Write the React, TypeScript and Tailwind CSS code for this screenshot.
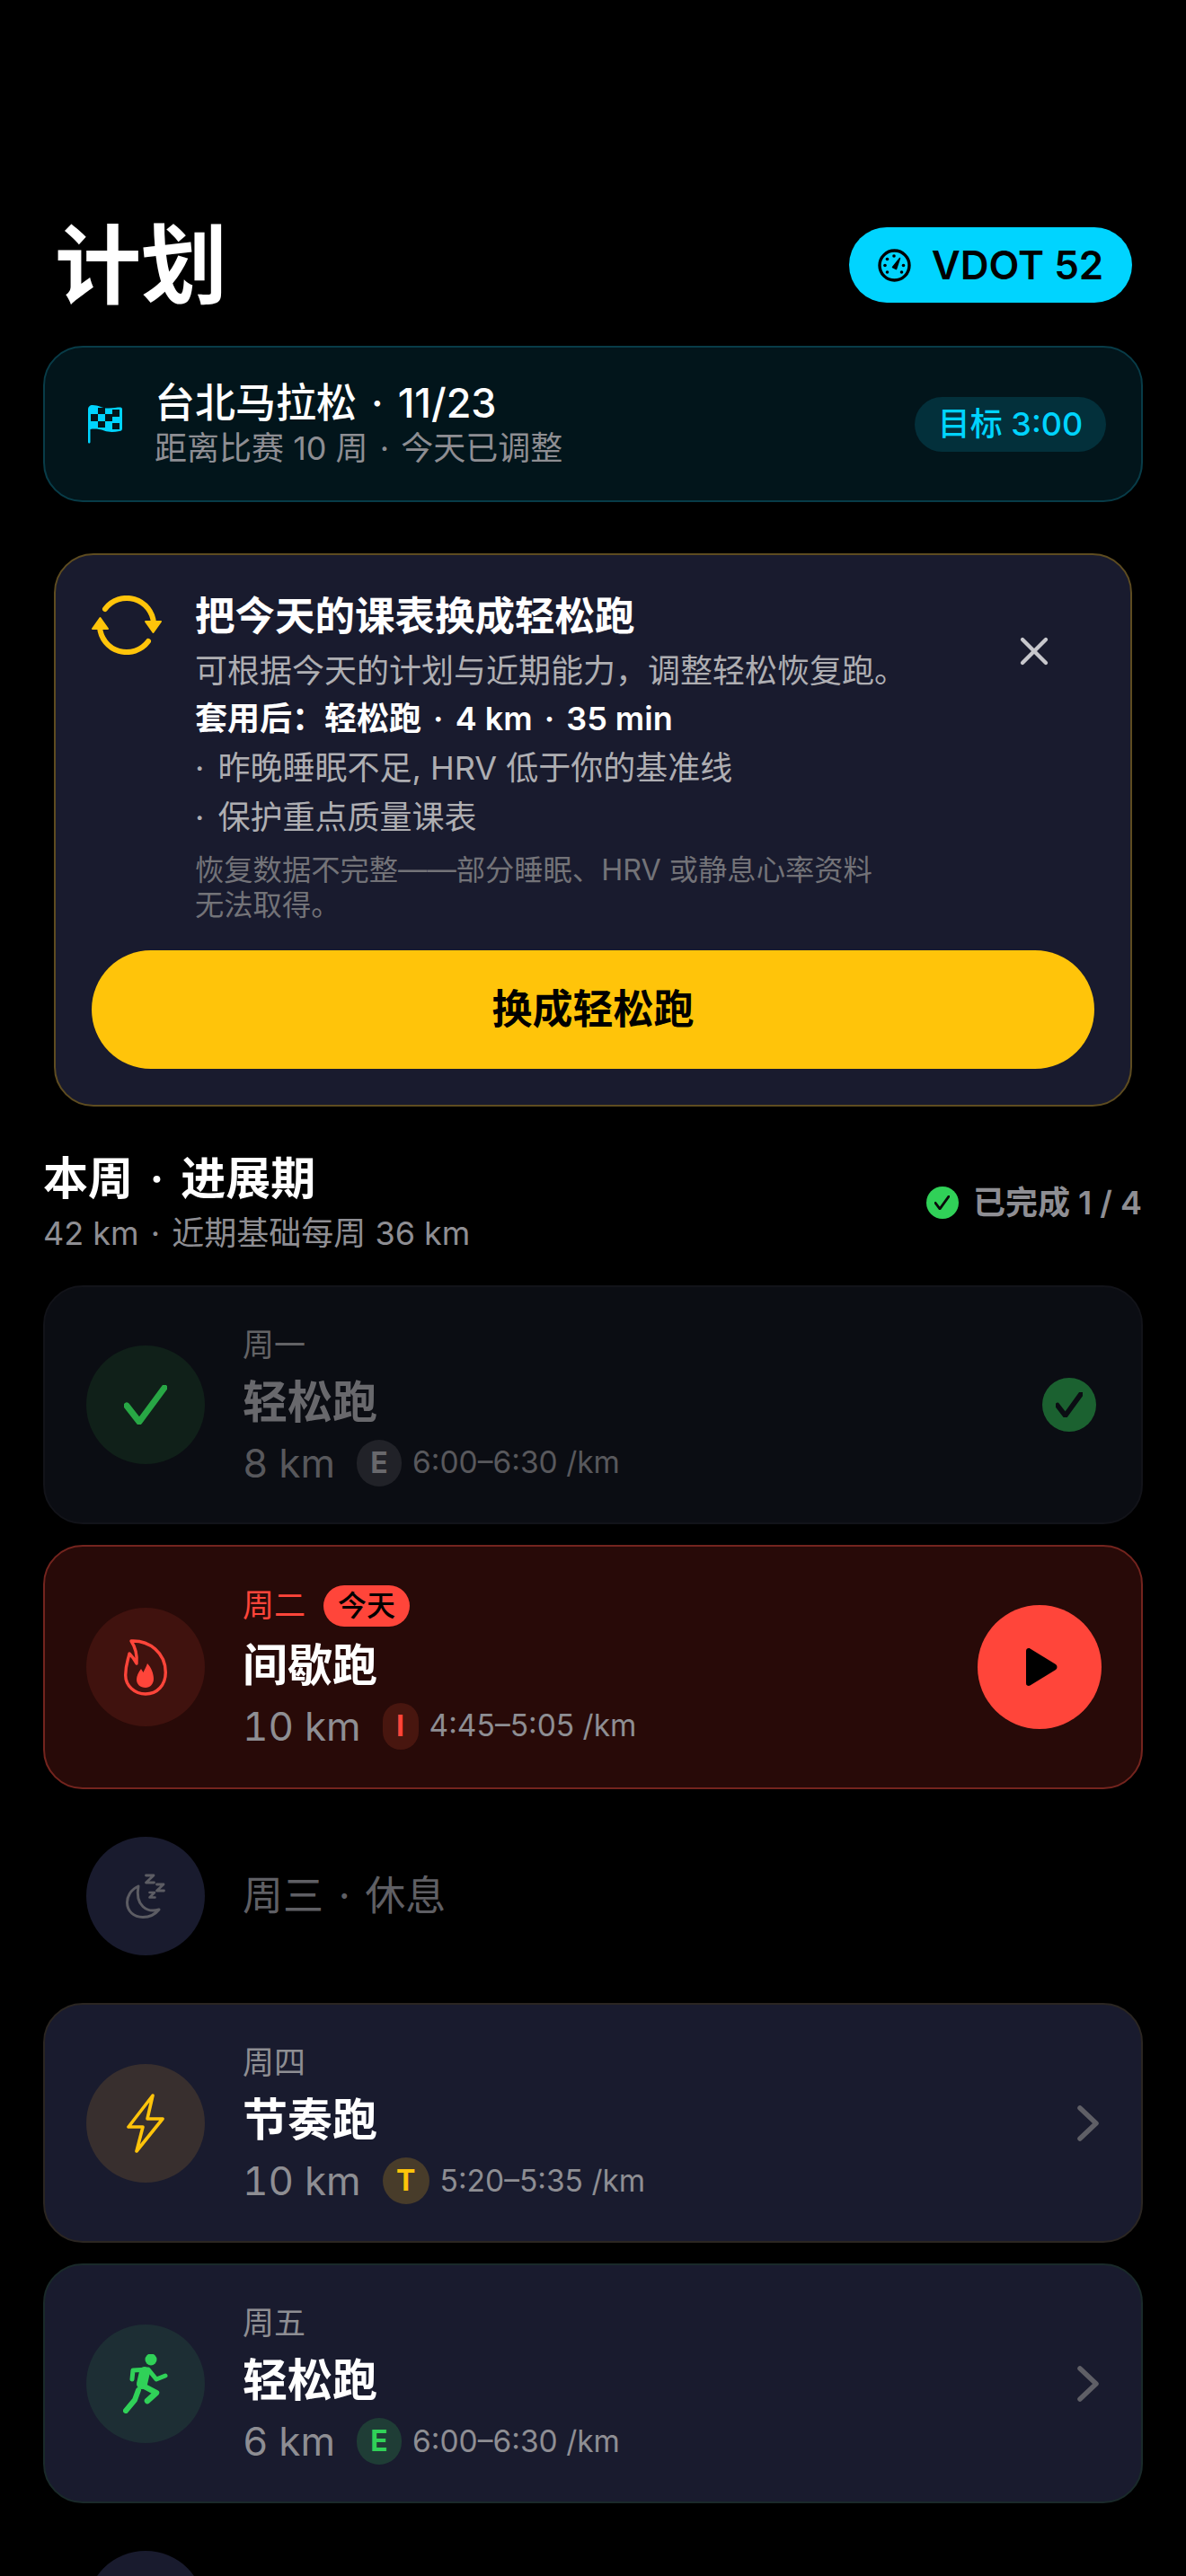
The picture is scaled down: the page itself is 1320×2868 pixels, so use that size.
import type { ReactNode } from "react";
import { X } from "lucide-react";

function GaugeIcon() {
  return (
    <svg width="37" height="37" viewBox="0 0 37 37" fill="none">
      <circle cx="18.5" cy="18.5" r="16.5" stroke="#000" strokeWidth="3.4" />
      <path d="M16.5 20.5 L24.5 10.5 L20.5 22.5 Z" fill="#000" stroke="#000" strokeWidth="1.5" strokeLinejoin="round" />
      <g fill="#000">
        <circle cx="18" cy="8" r="1.8" />
        <circle cx="10.5" cy="11.5" r="1.8" />
        <circle cx="8" cy="18.5" r="1.8" />
        <circle cx="10.5" cy="26" r="1.8" />
        <circle cx="28.5" cy="18.5" r="1.8" />
        <circle cx="26.5" cy="26" r="1.8" />
      </g>
    </svg>
  );
}

function FlagIcon() {
  return (
    <svg width="40" height="44" viewBox="0 0 40 44" fill="none">
      <path
        d="M1 42 V6 C1 3 3 1 6 1 C13 1 17 5 24 4.5 C29 4.2 33 3.5 37 3.5 C38.5 3.5 39 4.5 39 6 V27 C39 29 38 30 36 30 C30 31 25 31.5 19 29.5 C13 27.5 8 27 3.5 28 V42 C3.5 44 1 44 1 42 Z"
        fill="#00d4ff"
      />
      <g fill="#02151b">
        <rect x="4" y="11" width="8" height="8" />
        <rect x="12" y="4" width="8" height="7" />
        <rect x="20" y="11" width="8" height="8" />
        <rect x="28" y="6" width="8" height="8" />
        <rect x="12" y="19" width="8" height="7" />
        <rect x="28" y="21" width="8" height="7" />
      </g>
    </svg>
  );
}

function SwapIcon() {
  return (
    <svg width="78" height="66" viewBox="0 0 78 66" fill="none">
      <path d="M15 15 A30 30 0 0 1 69 31" stroke="#ffc40a" strokeWidth="6" strokeLinecap="round" />
      <path d="M63 51 A30 30 0 0 1 9 35" stroke="#ffc40a" strokeWidth="6" strokeLinecap="round" />
      <path d="M60 29 H77 L68.5 41 Z" fill="#ffc40a" stroke="#ffc40a" strokeWidth="2" strokeLinejoin="round" />
      <path d="M1 37 H18 L9.5 25 Z" fill="#ffc40a" stroke="#ffc40a" strokeWidth="2" strokeLinejoin="round" />
    </svg>
  );
}

function FlameIcon() {
  return (
    <svg width="48" height="64" viewBox="0 0 48 64" fill="none">
      <path
        d="M8 3 C12 9 15 16 14 28 C12 24 10 21 6 17 C4 26 1.7 30 1.7 41 C1.7 53 12 62 24 62 C37 62 46.3 52 46.3 38 C46.3 16 28 2 8 3 Z"
        stroke="#ff453a"
        strokeWidth="3.4"
        strokeLinejoin="round"
      />
      <path
        d="M14 46 C14 42 16 38 19 34 L21.5 38 C23 35 25 31 26 28 C30 32 33 39 33 45 C33 51 29 55 24 55 C18 55 14 51 14 46 Z"
        fill="#ff453a"
      />
    </svg>
  );
}

function MoonIcon({ color }: { color: string }) {
  return (
    <svg width="44" height="50" viewBox="0 0 44 50" fill="none" stroke={color} strokeLinecap="round" strokeLinejoin="round">
      <path d="M14 14 C5 18 1.5 26 1.5 32 C1.5 42 9 48.5 19 48.5 C27 48.5 33 45 37 40 C24 44 10 36 14 14 Z" strokeWidth="3" />
      <path d="M22.5 2 H31 L22.5 10 H31.5" strokeWidth="2.8" />
      <path d="M34.5 12 H42 L34.5 19 H42.5" strokeWidth="2.8" />
      <path d="M26.5 21 H32 L26.5 26.5 H32.5" strokeWidth="2.6" />
    </svg>
  );
}

function BoltIcon() {
  return (
    <svg width="42" height="66" viewBox="0 0 42 66" fill="none">
      <path d="M29 2 L2 37 H18 L11 64 L40 28 H23 Z" stroke="#ffc40a" strokeWidth="3.6" strokeLinejoin="round" />
    </svg>
  );
}

function RunnerIcon() {
  return (
    <svg width="50" height="66" viewBox="0 0 50 66" fill="none" stroke="#30d158" strokeLinecap="round" strokeLinejoin="round">
      <circle cx="31" cy="6" r="6.5" fill="#30d158" stroke="none" />
      <path d="M10 28 L11 18 L28 17 L37 28 L47 24" strokeWidth="5" />
      <path d="M24 20 L21 33" strokeWidth="12" />
      <path d="M20 34 L37 43 L27 52" strokeWidth="6.5" />
      <path d="M17 40 L13 51 L3 63" strokeWidth="6" />
    </svg>
  );
}

function CheckMark({ w, h, sw, color }: { w: number; h: number; sw: number; color: string }) {
  return (
    <svg width={w} height={h} viewBox="0 0 48 44" fill="none" preserveAspectRatio="none">
      <path d="M3 23 L17 41 L45 3" stroke={color} strokeWidth={sw} strokeLinecap="round" strokeLinejoin="round" />
    </svg>
  );
}

function Chevron() {
  return (
    <svg width="24" height="40" viewBox="0 0 24 40" fill="none">
      <path d="M3 3 L21 20 L3 37" stroke="#5f5f66" strokeWidth="5.5" strokeLinecap="round" strokeLinejoin="round" />
    </svg>
  );
}

function Dot({ gap }: { gap: string }) {
  return <span className={gap}>·</span>;
}

type Workout = {
  day: string;
  title: string;
  km: string;
  zone: string;
  pace: string;
  icon: ReactNode;
  iconBg: string;
  zoneClass: string;
  borderClass: string;
};

const THURSDAY: Workout = {
  day: "周四",
  title: "节奏跑",
  km: "10 km",
  zone: "T",
  pace: "5:20–5:35 /km",
  icon: <BoltIcon />,
  iconBg: "bg-[#382f2e]",
  zoneClass: "w-[52px] bg-[#483c2a] text-[#ffc40a]",
  borderClass: "border-[#2b2622]",
};

const FRIDAY: Workout = {
  day: "周五",
  title: "轻松跑",
  km: "6 km",
  zone: "E",
  pace: "6:00–6:30 /km",
  icon: <RunnerIcon />,
  iconBg: "bg-[#1d2e34]",
  zoneClass: "w-[50px] bg-[#1f3d36] text-[#30d158]",
  borderClass: "border-[#1a2a2a]",
};

function WorkoutCard({ w }: { w: Workout }) {
  return (
    <div className={`flex h-[267px] items-center rounded-[44px] border-2 bg-[#191b2e] pl-[46px] pr-[47px] ${w.borderClass}`}>
      <div className={`flex h-[132px] w-[132px] shrink-0 items-center justify-center rounded-full ${w.iconBg}`}>{w.icon}</div>
      <div className="ml-[42px] flex-1">
        <p className="text-[35px] leading-[46px] text-[#8e8e93]">{w.day}</p>
        <p className="mt-[9px] text-[50px] font-semibold leading-[64px] text-white">{w.title}</p>
        <div className="mt-[10px] flex h-[52px] items-center">
          <span className="text-[44px] tabular-nums text-[#8e8e93]">{w.km}</span>
          <span className={`ml-[24px] flex h-[52px] items-center justify-center rounded-full text-[32px] font-bold ${w.zoneClass}`}>{w.zone}</span>
          <span className="ml-[12px] text-[33.5px] text-[#8e8e93]">{w.pace}</span>
        </div>
      </div>
      <Chevron />
    </div>
  );
}

function RestCircle() {
  return (
    <div className="flex h-[132px] w-[132px] items-center justify-center rounded-full bg-[#191b2e]">
      <MoonIcon color="#5c5c63" />
    </div>
  );
}

export default function App() {
  return (
    <div className="h-[2868px] w-full overflow-hidden bg-black pt-[253px] font-['Inter','Noto_Sans_CJK_SC',sans-serif]">
      <header className="flex h-[84px] items-center justify-between pl-[61px] pr-[60px]">
        <h1 className="text-[96px] font-bold leading-[84px] text-white">计划</h1>
        <div className="flex h-[84px] w-[315px] items-center justify-center gap-[23px] rounded-full bg-[#00d4ff]">
          <GaugeIcon />
          <span className="text-[44px] font-semibold text-black">VDOT 52</span>
        </div>
      </header>

      <section className="mx-[48px] mt-[48px] flex h-[174px] items-center rounded-[44px] border-2 border-[#083c48] bg-[#02151b] pl-[47px] pr-[39px]">
        <FlagIcon />
        <div className="ml-[35px] flex-1">
          <p className="text-[45px] font-medium leading-[54px] text-white">
            台北马拉松 <Dot gap="mx-[4px]" /> 11/23
          </p>
          <p className="text-[36px] leading-[46px] text-[#8e8e93]">
            距离比赛 10 周 <Dot gap="mx-[3px]" /> 今天已调整
          </p>
        </div>
        <div className="flex h-[61px] w-[213px] items-center justify-center rounded-full bg-[#03303b] text-[36px] font-medium text-[#00d4ff]">目标 3:00</div>
      </section>

      <section className="mx-[60px] mt-[57px] rounded-[44px] border-2 border-[#5e4c20] bg-[#191b2e] px-[40px] pb-[40px] pt-[40px]">
        <div className="flex">
          <div className="mt-[5px] w-[115px] shrink-0">
            <SwapIcon />
          </div>
          <div className="w-[800px]">
            <p className="text-[44.5px] font-semibold leading-[56px] text-white">把今天的课表换成轻松跑</p>
            <p className="mt-[7px] text-[36px] leading-[52px] text-[#aeaeb2]">可根据今天的计划与近期能力，调整轻松恢复跑。</p>
            <p className="text-[36px] font-semibold leading-[55px] text-white">
              套用后：轻松跑 <Dot gap="mx-[4px]" /> 4 km <Dot gap="mx-[4px]" /> 35 min
            </p>
            <p className="text-[36px] leading-[55px] text-[#aeaeb2]">
              <Dot gap="mr-[5px]" /> 昨晚睡眠不足, HRV 低于你的基准线
            </p>
            <p className="text-[36px] leading-[55px] text-[#aeaeb2]">
              <Dot gap="mr-[5px]" /> 保护重点质量课表
            </p>
            <p className="mt-[11px] text-[32.3px] leading-[39px] text-[#737378]">
              恢复数据不完整——部分睡眠、HRV 或静息心率资料
              <br />
              无法取得。
            </p>
          </div>
          <X className="ml-[108px] mt-[41px] h-[52px] w-[52px] shrink-0 text-[#c7c7cc]" strokeWidth={2} />
        </div>
        <button className="mt-[31px] flex h-[132px] w-full items-center justify-center rounded-full bg-[#ffc40a] text-[45px] font-semibold text-black">换成轻松跑</button>
      </section>

      <div className="mt-[50px] flex items-center justify-between pl-[48px] pr-[49px]">
        <div>
          <p className="text-[50px] font-semibold leading-[60px] text-white">
            本周 <Dot gap="mx-[6px]" /> 进展期
          </p>
          <p className="mt-[6px] text-[36px] leading-[50px] text-[#8e8e93]">
            42 km <Dot gap="mx-[3px]" /> 近期基础每周 36 km
          </p>
        </div>
        <div className="mb-[2px] flex items-center gap-[16px]">
          <span className="flex h-[36px] w-[36px] items-center justify-center rounded-full bg-[#30d158]">
            <CheckMark w={17} h={16} sw={8} color="#0a0a0a" />
          </span>
          <span className="text-[36px] font-semibold text-[#8e8e93]">已完成 1 / 4</span>
        </div>
      </div>

      <div className="mx-[48px] mt-[33px] flex flex-col gap-[23px]">
        <div className="flex h-[266px] items-center rounded-[44px] border-2 border-[#121319] bg-[#0b0d13] pl-[46px] pr-[50px]">
          <div className="flex h-[132px] w-[132px] shrink-0 items-center justify-center rounded-full bg-[#102019]">
            <CheckMark w={48} h={44} sw={7} color="#28a745" />
          </div>
          <div className="ml-[42px] flex-1">
            <p className="text-[35px] leading-[46px] text-[#636366]">周一</p>
            <p className="mt-[9px] text-[50px] font-semibold leading-[64px] text-[#68686c]">轻松跑</p>
            <div className="mt-[10px] flex h-[52px] items-center">
              <span className="text-[44px] tabular-nums text-[#58585c]">8 km</span>
              <span className="ml-[24px] flex h-[52px] w-[50px] items-center justify-center rounded-full bg-[#212228] text-[32px] font-bold text-[#68686c]">E</span>
              <span className="ml-[12px] text-[33.5px] text-[#58585c]">6:00–6:30 /km</span>
            </div>
          </div>
          <span className="flex h-[60px] w-[60px] items-center justify-center rounded-full bg-[#1b6130]">
            <CheckMark w={30} h={28} sw={9} color="#0b0d13" />
          </span>
        </div>

        <div className="flex h-[272px] items-center rounded-[44px] border-2 border-[#74241e] bg-[#280a08] pl-[46px] pr-[44px]">
          <div className="flex h-[132px] w-[132px] shrink-0 items-center justify-center rounded-full bg-[#40120e]">
            <FlameIcon />
          </div>
          <div className="ml-[42px] flex-1">
            <div className="flex h-[46px] items-center">
              <span className="text-[35px] text-[#ff453a]">周二</span>
              <span className="ml-[20px] flex h-[46px] w-[96px] items-center justify-center rounded-full bg-[#ff453a] text-[32px] font-medium text-black">今天</span>
            </div>
            <p className="mt-[11px] text-[50px] font-semibold leading-[64px] text-white">间歇跑</p>
            <div className="mt-[10px] flex h-[52px] items-center">
              <span className="text-[44px] tabular-nums text-[#8e8e93]">10 km</span>
              <span className="ml-[24px] flex h-[52px] w-[40px] items-center justify-center rounded-full bg-[#48160f] text-[32px] font-bold text-[#ff453a]">I</span>
              <span className="ml-[12px] text-[33.5px] text-[#8e8e93]">4:45–5:05 /km</span>
            </div>
          </div>
          <span className="flex h-[138px] w-[138px] items-center justify-center rounded-full bg-[#ff453a]">
            <svg width="38" height="44" viewBox="0 0 38 44" className="ml-[4px]">
              <path d="M2 4 C2 1.5 4.5 0.5 6.5 1.5 L35 19 C37 20.5 37 23.5 35 25 L6.5 42.5 C4.5 43.5 2 42.5 2 40 Z" fill="#000" />
            </svg>
          </span>
        </div>

        <div className="flex items-center py-[30px] pl-[48px]">
          <RestCircle />
          <span className="ml-[42px] text-[45px] text-[#5f5f64]">
            周三 <Dot gap="mx-[4px]" /> 休息
          </span>
        </div>
        <WorkoutCard w={THURSDAY} />
        <WorkoutCard w={FRIDAY} />
        <div className="flex items-center pl-[48px] pt-[30px]">
          <RestCircle />
        </div>
      </div>
    </div>
  );
}
